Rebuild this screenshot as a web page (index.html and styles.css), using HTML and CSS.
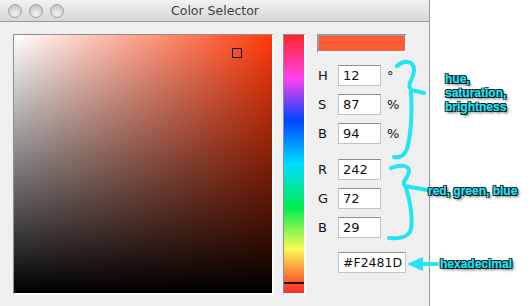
FILE: index.html
```html
<!DOCTYPE html>
<html>
<head>
    <title>Color Selector</title>
    <link rel="stylesheet" href="styles.css">
</head>
<body>
    <div class="screen">
        <div class="window">
            <div class="titlebar">
                <div class="lights">
                    <span class="light"></span>
                    <span class="light"></span>
                    <span class="light"></span>
                </div>
                <div class="title">Color Selector</div>
            </div>

            <div class="content">
                <div class="field">
                    <div class="field-inner">
                        <div class="picker-mark"></div>
                    </div>
                </div>

                <div class="hue-bar">
                    <div class="hue-inner">
                        <div class="hue-mark"></div>
                    </div>
                </div>

                <div class="values">
                    <div class="swatch"></div>

                    <div class="group">
                        <div class="row"><span class="label">H</span><input class="box" value="12"><span class="unit">°</span></div>
                        <div class="row"><span class="label">S</span><input class="box" value="87"><span class="unit">%</span></div>
                        <div class="row"><span class="label">B</span><input class="box" value="94"><span class="unit">%</span></div>
                    </div>

                    <div class="group rgb">
                        <div class="row"><span class="label">R</span><input class="box" value="242"></div>
                        <div class="row"><span class="label">G</span><input class="box" value="72"></div>
                        <div class="row"><span class="label">B</span><input class="box" value="29"></div>
                    </div>

                    <div class="row hex-row"><span class="label"></span><input class="box hex" value="#F2481D"></div>
                </div>
            </div>
        </div>
        <div class="desk"></div>

        <!-- hand drawn notes on top of the screenshot -->
        <svg class="notes" width="531" height="306" viewBox="0 0 531 306">
            <g fill="none" stroke="#22e4f5" stroke-width="4" stroke-linecap="round" stroke-linejoin="round">
                <path d="M397,66 C403,60 414,60 414,70 C414,79 406,84 411,90 L424,93"/>
                <path d="M411,92 C412,110 411,134 407,149 C404,156 399,158 394,157"/>
                <path d="M391,168 C399,165 410,164 409,172 C408,178 401,182 405,186 L427,190"/>
                <path d="M406,188 C410,200 414,222 410,232 C406,238 396,239 389,238"/>
                <path d="M421,264 L437,264"/>
            </g>
            <path d="M407,264 L423,257 L423,271 Z" fill="#22e4f5"/>
        </svg>
        <div class="note note-hsb">hue,<br>saturation,<br>brightness</div>
        <div class="note note-rgb">red, green, blue</div>
        <div class="note note-hex">hexadecimal</div>
    </div>
</body>
</html>
```

FILE: styles.css
```css
body {
    margin: 0;
    background: #fff;
    font-family: "DejaVu Sans", sans-serif;
}

.screen {
    position: relative;
    display: flex;
    width: 531px;
    height: 306px;
    overflow: hidden;
}

.window {
    width: 429px;
    height: 306px;
    border-right: 1px solid #9a9a9a;
    background: #efefef;
}

.desk {
    flex: 1;
    background: #fff;
}

.titlebar {
    position: relative;
    height: 21px;
    border-bottom: 1px solid #9c9c9c;
    background: linear-gradient(to bottom, #f2f2f2, #d6d6d6);
    display: flex;
    align-items: center;
    justify-content: center;
}

.lights {
    position: absolute;
    left: 8px;
    top: 4px;
    display: flex;
    gap: 7px;
}

.light {
    width: 12px;
    height: 12px;
    border-radius: 50%;
    border: 1px solid #a4a4a4;
    background: radial-gradient(circle at 50% 75%, #f4f4f4 0%, #d4d4d4 55%, #b6b6b6 100%);
}

.title {
    font-size: 12.5px;
    color: #3f3f3f;
    padding-left: 1px;
}

.content {
    display: flex;
    padding: 12px 0 0 13px;
}

.field {
    border-top: 1px solid #8e8e8e;
    border-left: 1px solid #8e8e8e;
    border-right: 2px solid #fff;
    border-bottom: 2px solid #fff;
}

.field-inner {
    position: relative;
    width: 258px;
    height: 258px;
    background:
        linear-gradient(to top, #000, rgba(0, 0, 0, 0)),
        linear-gradient(to right, #fff, #ff3a0a);
}

.picker-mark {
    position: absolute;
    left: 218px;
    top: 13px;
    width: 8px;
    height: 8px;
    border: 1px solid #000;
}

.hue-bar {
    margin-left: 9px;
    border-top: 1px solid #8e8e8e;
    border-left: 1px solid #8e8e8e;
    border-right: 2px solid #fff;
    border-bottom: 2px solid #fff;
}

.hue-inner {
    position: relative;
    width: 20px;
    height: 258px;
    background: linear-gradient(to bottom,
        #ff2626 0%, #ff42f0 17%, #0044ff 33%, #00deff 50%,
        #00ee50 67%, #fafa55 83%, #ff2626 100%);
}

.hue-mark {
    position: absolute;
    left: 0;
    right: 0;
    top: 247px;
    height: 2px;
    background: #1a1a1a;
}

.values {
    margin-left: 11px;
    display: flex;
    flex-direction: column;
}

.swatch {
    width: 86px;
    height: 15px;
    border-top: 2px solid #9a9a9a;
    border-left: 2px solid #9a9a9a;
    border-right: 2px solid #fff;
    border-bottom: 2px solid #fff;
    background: #fe5c36;
}

.group {
    display: flex;
    flex-direction: column;
    gap: 8px;
    margin-top: 12px;
}

.group.rgb {
    margin-top: 15px;
}

.row {
    display: flex;
    align-items: center;
    height: 21px;
    font-size: 13px;
    color: #111;
}

.hex-row {
    margin-top: 14px;
}

.label {
    width: 21px;
    padding-left: 1px;
    box-sizing: border-box;
}

.box {
    box-sizing: border-box;
    width: 43px;
    height: 21px;
    margin: 0;
    padding: 0 4px;
    border: 1px solid #c2c2c2;
    border-top-color: #8e8e8e;
    background: #fff;
    font-family: "DejaVu Sans", sans-serif;
    font-size: 13px;
    color: #111;
    outline: none;
}

.box.hex {
    width: 68px;
    padding: 0 1px 0 4px;
    font-size: 12.5px;
}

.unit {
    margin-left: 6px;
}

.notes {
    position: absolute;
    left: 0;
    top: 0;
}

.note {
    position: absolute;
    font-family: "Liberation Sans", Arial, sans-serif;
    font-weight: bold;
    font-size: 12px;
    line-height: 14px;
    color: #22e4f5;
    white-space: nowrap;
    -webkit-text-stroke: 0.3px #22e4f5;
    text-shadow:
        1px 1px 0 #000, -1px -1px 0 #000, 1px -1px 0 #000, -1px 1px 0 #000,
        2px 2px 3px rgba(0, 0, 0, 0.8);
}

.note-hsb {
    left: 445px;
    top: 72px;
}

.note-rgb {
    left: 428px;
    top: 184px;
}

.note-hex {
    left: 440px;
    top: 257px;
}
```
